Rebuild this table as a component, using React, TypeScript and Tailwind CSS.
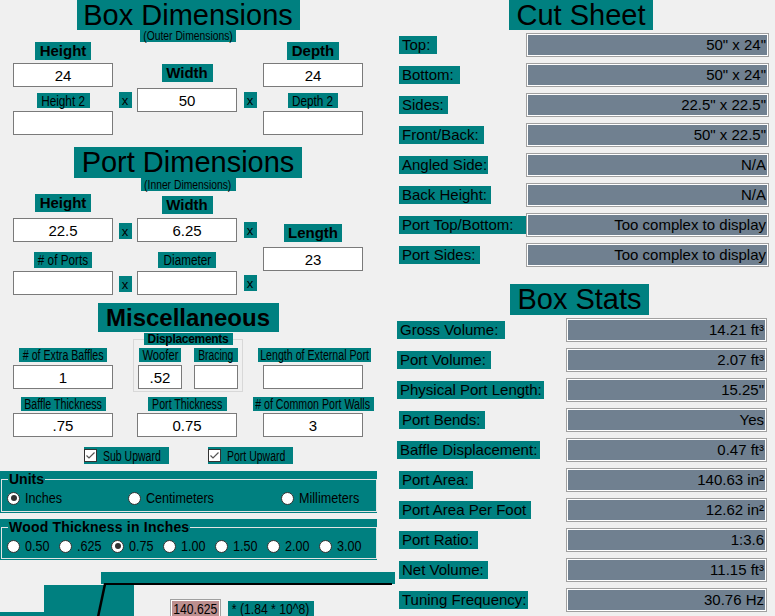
import React from "react";

function Tag({ className = "", children }: { className?: string; children?: React.ReactNode }) {
  return (
    <div className={`bg-[#008080] text-black flex items-center justify-center whitespace-nowrap ${className}`}>
      {children}
    </div>
  );
}

// condensed text, like the old form's narrow labels
function Narrow({
  className = "text-[14px] leading-[14px] scale-x-[0.76]",
  children,
}: {
  className?: string;
  children: React.ReactNode;
}) {
  return <span className={`inline-block whitespace-nowrap ${className}`}>{children}</span>;
}

function Field({ value = "", className = "w-[100px]" }: { value?: string; className?: string }) {
  return (
    <input
      readOnly
      value={value}
      className={`h-[24px] border border-[#7a7a7a] bg-white text-center text-[15px] text-black outline-none ${className}`}
    />
  );
}

function XBox() {
  return <div className="w-[13px] h-[16px] bg-[#008080] flex items-center justify-center text-[13px] leading-none pt-[1px]">x</div>;
}

function Check({ label, className = "" }: { label: string; className?: string }) {
  return (
    <div className={`h-[17px] w-[85px] bg-[#008080] flex items-center ${className}`}>
      <span className="w-[13px] h-[13px] bg-white border border-[#333] flex items-center justify-center shrink-0">
        <svg width="11" height="11" viewBox="0 0 11 11">
          <path d="M1.5 5.5 L4 8 L9.5 2.5" fill="none" stroke="#555" strokeWidth="1.2" />
        </svg>
      </span>
      <span className="ml-[6px] inline-block origin-left whitespace-nowrap text-[14px] leading-[14px] scale-x-[0.75]">{label}</span>
    </div>
  );
}

function Radio({ checked = false }: { checked?: boolean }) {
  return (
    <span className="w-[13px] h-[13px] rounded-full bg-white border border-[#333] flex items-center justify-center shrink-0">
      {checked && <span className="w-[6px] h-[6px] rounded-full bg-[#333]" />}
    </span>
  );
}

function RadioText({ children }: { children: React.ReactNode }) {
  return <span className="inline-block origin-left whitespace-nowrap text-[14px] leading-[14px] scale-x-[0.9]">{children}</span>;
}

function ValBox({ className = "", children }: { className?: string; children: React.ReactNode }) {
  return (
    <div
      className={`h-[24px] border border-[#a0a0a0] bg-[#708090] shadow-[inset_0_0_0_1px_#ffffff] flex items-center justify-end pr-[2px] text-[15px] whitespace-nowrap ${className}`}
    >
      {children}
    </div>
  );
}

const cutRows = [
  ["Top:", '50" x 24"', "w-[38px]"],
  ["Bottom:", '50" x 24"', "w-[61px]"],
  ["Sides:", '22.5" x 22.5"', "w-[49px]"],
  ["Front/Back:", '50" x 22.5"', "w-[85px]"],
  ["Angled Side:", "N/A", "w-[89px]"],
  ["Back Height:", "N/A", "w-[92px]"],
  ["Port Top/Bottom:", "Too complex to display", "w-[127px]"],
  ["Port Sides:", "Too complex to display", "w-[81px]"],
];

const statRows = [
  ["Gross Volume:", "14.21 ft³", "w-[108px]"],
  ["Port Volume:", "2.07 ft³", "w-[94px]"],
  ["Physical Port Length:", '15.25"', "w-[147px]"],
  ["Port Bends:", "Yes", "w-[86px] ml-[2px]"],
  ["Baffle Displacement:", "0.47 ft³", "w-[143px]"],
  ["Port Area:", "140.63 in²", "w-[74px] ml-[2px]"],
  ["Port Area Per Foot", "12.62 in²", "w-[132px] ml-[2px]"],
  ["Port Ratio:", "1:3.6", "w-[79px] ml-[2px]"],
  ["Net Volume:", "11.15 ft³", "w-[89px] ml-[2px]"],
  ["Tuning Frequency:", "30.76 Hz", "w-[129px] ml-[2px]"],
];

const woods = ["0.50", ".625", "0.75", "1.00", "1.50", "2.00", "3.00"];

const small = "text-[14px] leading-[14px] scale-x-[0.84]";
const sub = "text-[12px] leading-[12px] scale-x-[0.86]";
const bottomText = "text-[14px] leading-[14px] scale-x-[0.87]";

export default function App() {
  return (
    <div className="w-[775px] h-[616px] overflow-hidden bg-[#f0f0f0] flex font-['Liberation_Sans',Arial,sans-serif] text-black">
      {/* left side */}
      <div className="w-[397px] shrink-0">
        <div className="w-[350px] ml-[13px]">
          {/* Box Dimensions */}
          <Tag className="mx-auto w-[223px] h-[30px] text-[29px] leading-none">Box Dimensions</Tag>
          <Tag className="mx-auto w-[96px] h-[12px]">
            <Narrow className={sub}>(Outer Dimensions)</Narrow>
          </Tag>
          <div className="grid grid-cols-[100px_24px_100px_26px_100px] items-start">
            <div className="flex flex-col items-center">
              <Tag className="w-[56px] h-[18px] text-[15px] font-bold">Height</Tag>
              <Field value="24" className="w-[100px] mt-[3px]" />
              <Tag className="w-[53px] h-[15px] mt-[6px]">
                <Narrow className={small}>Height 2</Narrow>
              </Tag>
              <Field className="w-[100px] mt-[3px]" />
            </div>
            <div className="flex justify-center pt-[50px]">
              <XBox />
            </div>
            <div className="flex flex-col items-center pt-[22px]">
              <Tag className="w-[51px] h-[18px] text-[15px] font-bold">Width</Tag>
              <Field value="50" className="w-[100px] mt-[6px]" />
            </div>
            <div className="flex justify-center pt-[50px]">
              <XBox />
            </div>
            <div className="flex flex-col items-center">
              <Tag className="w-[52px] h-[18px] text-[15px] font-bold">Depth</Tag>
              <Field value="24" className="w-[100px] mt-[3px]" />
              <Tag className="w-[50px] h-[15px] mt-[6px]">
                <Narrow className={small}>Depth 2</Narrow>
              </Tag>
              <Field className="w-[100px] mt-[3px]" />
            </div>
          </div>

          {/* Port Dimensions */}
          <Tag className="mx-auto mt-[12px] w-[228px] h-[31px] text-[29px] leading-none">Port Dimensions</Tag>
          <Tag className="mx-auto w-[95px] h-[13px]">
            <Narrow className={sub}>(Inner Dimensions)</Narrow>
          </Tag>
          <div className="grid grid-cols-[100px_24px_100px_26px_100px] items-start">
            <div className="flex flex-col items-center pt-[3px]">
              <Tag className="w-[56px] h-[18px] text-[15px] font-bold">Height</Tag>
              <Field value="22.5" className="w-[100px] mt-[6px]" />
              <Tag className="w-[58px] h-[16px] mt-[10px]">
                <Narrow className={small}># of Ports</Narrow>
              </Tag>
              <Field className="w-[100px] mt-[3px]" />
            </div>
            <div className="flex flex-col items-center pt-[32px]">
              <XBox />
              <div className="mt-[37px]">
                <XBox />
              </div>
            </div>
            <div className="flex flex-col items-center pt-[5px]">
              <Tag className="w-[51px] h-[18px] text-[15px] font-bold">Width</Tag>
              <Field value="6.25" className="w-[100px] mt-[4px]" />
              <Tag className="w-[58px] h-[16px] mt-[10px]">
                <Narrow className={small}>Diameter</Narrow>
              </Tag>
              <Field className="w-[100px] mt-[3px]" />
            </div>
            <div className="flex flex-col items-center pt-[31px]">
              <XBox />
              <div className="mt-[37px]">
                <XBox />
              </div>
            </div>
            <div className="flex flex-col items-center pt-[33px]">
              <Tag className="w-[58px] h-[18px] text-[15px] font-bold">Length</Tag>
              <Field value="23" className="w-[100px] mt-[5px]" />
            </div>
          </div>

          {/* Miscellaneous */}
          <Tag className="mx-auto mt-[8px] w-[181px] h-[29px] text-[24px] font-bold leading-none">Miscellaneous</Tag>
          <div className="flex items-start">
            <div className="w-[100px] flex flex-col items-center pt-[16px]">
              <Tag className="w-[88px] h-[14px]">
                <Narrow># of Extra Baffles</Narrow>
              </Tag>
              <Field value="1" className="w-[100px] mt-[3px]" />
            </div>
            <div className="ml-[20px] mt-[7px] w-[110px] border border-[#d8d8d8] flex flex-col pb-[2px]">
              <Tag className="mx-auto -mt-[7px] w-[89px] h-[12px] text-[12px] font-bold tracking-[-0.3px]">Displacements</Tag>
              <div className="flex pl-[4px] gap-[12px]">
                <div className="w-[44px] flex flex-col items-center">
                  <Tag className="w-[42px] h-[14px] mt-[3px]">
                    <Narrow className="text-[14px] leading-[14px] scale-x-[0.8]">Woofer</Narrow>
                  </Tag>
                  <Field value=".52" className="w-[44px] mt-[3px]" />
                </div>
                <div className="w-[44px] flex flex-col items-center">
                  <Tag className="w-[44px] h-[14px] mt-[3px]">
                    <Narrow className="text-[14px] leading-[14px] scale-x-[0.74]">Bracing</Narrow>
                  </Tag>
                  <Field className="w-[44px] mt-[3px]" />
                </div>
              </div>
            </div>
            <div className="ml-[20px] w-[100px] flex flex-col items-center pt-[16px]">
              <Tag className="w-[113px] h-[14px] ml-[3px]">
                <Narrow>Length of External Port</Narrow>
              </Tag>
              <Field className="w-[100px] mt-[3px]" />
            </div>
          </div>
          <div className="flex items-start mt-[5px]">
            <div className="w-[100px] flex flex-col items-center">
              <Tag className="w-[85px] h-[14px]">
                <Narrow>Baffle Thickness</Narrow>
              </Tag>
              <Field value=".75" className="w-[100px] mt-[2px]" />
            </div>
            <div className="ml-[24px] w-[100px] flex flex-col items-center">
              <Tag className="w-[79px] h-[14px]">
                <Narrow>Port Thickness</Narrow>
              </Tag>
              <Field value="0.75" className="w-[100px] mt-[2px]" />
            </div>
            <div className="ml-[26px] w-[100px] flex flex-col items-center">
              <Tag className="w-[121px] h-[14px]">
                <Narrow># of Common Port Walls</Narrow>
              </Tag>
              <Field value="3" className="w-[100px] mt-[2px]" />
            </div>
          </div>
          <div className="flex mt-[10px]">
            <Check label="Sub Upward" className="ml-[71px]" />
            <Check label="Port Upward" className="ml-[39px]" />
          </div>
        </div>

        {/* Units */}
        <div className="mt-[7px] w-[377px] h-[42px] bg-[#008080] pl-[1px]">
          <fieldset className="h-[41px] w-[376px] border border-[#e4e4e4] m-0 p-0 min-w-0">
            <legend className="ml-[6px] px-[1px] text-[14px] leading-[16px] font-bold">Units</legend>
            <div className="flex items-center mt-[4px] pl-[5px]">
              <div className="w-[121px] flex items-center gap-[5px]">
                <Radio checked />
                <RadioText>Inches</RadioText>
              </div>
              <div className="w-[153px] flex items-center gap-[5px]">
                <Radio />
                <RadioText>Centimeters</RadioText>
              </div>
              <div className="flex items-center gap-[5px]">
                <Radio />
                <RadioText>Millimeters</RadioText>
              </div>
            </div>
          </fieldset>
        </div>

        {/* Wood Thickness */}
        <div className="mt-[6px] w-[377px] h-[41px] bg-[#008080] pl-[1px]">
          <fieldset className="h-[40px] w-[376px] border border-[#e4e4e4] m-0 p-0 min-w-0">
            <legend className="ml-[6px] px-[1px] text-[14px] leading-[16px] font-bold tracking-[0.2px]">
              Wood Thickness in Inches
            </legend>
            <div className="grid grid-cols-[repeat(7,52px)] mt-[4px] pl-[5px]">
              {woods.map((w) => (
                <div key={w} className="flex items-center gap-[5px]">
                  <Radio checked={w === "0.75"} />
                  <RadioText>{w}</RadioText>
                </div>
              ))}
            </div>
          </fieldset>
        </div>

        {/* box drawing */}
        <div className="relative h-[56px] w-[397px]">
          <svg className="absolute inset-0" width="397" height="56" viewBox="0 0 397 56">
            <rect x="0" y="52" width="44" height="4" fill="#008080" />
            <rect x="44" y="25" width="90" height="31" fill="#008080" />
            <rect x="101" y="12" width="294" height="12" fill="#008080" />
            <line x1="104" y1="24" x2="392" y2="24" stroke="#000" strokeWidth="2" />
            <line x1="105" y1="24" x2="98" y2="57" stroke="#000" strokeWidth="2.5" />
          </svg>
          <div className="relative flex items-start pl-[170px] pt-[39px]">
            <div className="w-[51px] h-[17px] border border-[#a0a0a0] border-b-0 bg-[#bc8f8f] shadow-[inset_1px_1px_0_0_#ffffff,inset_-1px_0_0_0_#ffffff] flex items-start justify-center pt-[2px]">
              <Narrow className={bottomText}>140.625</Narrow>
            </div>
            <Tag className="ml-[7px] mt-[2px] w-[86px] h-[15px]">
              <Narrow className={bottomText}>* (1.84 * 10^8)</Narrow>
            </Tag>
          </div>
        </div>
      </div>

      {/* right side */}
      <div className="flex-1">
        <Tag className="ml-[112px] w-[144px] h-[30px] text-[29px] leading-none">Cut Sheet</Tag>
        <div className="mt-[3px] w-[372px] flex flex-col gap-[6px]">
          {cutRows.map(([label, value, w]) => (
            <div key={label} className="flex items-start h-[24px]">
              <div className={`ml-[2px] mt-[3px] h-[18px] bg-[#008080] pl-[3px] text-[15px] leading-[18px] whitespace-nowrap ${w}`}>
                {label}
              </div>
              <ValBox className="ml-auto w-[243px]">{value}</ValBox>
            </div>
          ))}
        </div>

        <Tag className="ml-[113px] mt-[17px] w-[139px] h-[31px] text-[29px] leading-none">Box Stats</Tag>
        <div className="mt-[3px] w-[370px] flex flex-col gap-[6px]">
          {statRows.map(([label, value, w]) => (
            <div key={label} className="flex items-start h-[24px]">
              <div className={`mt-[3px] h-[18px] bg-[#008080] pl-[3px] text-[15px] leading-[18px] whitespace-nowrap ${w}`}>
                {label}
              </div>
              <ValBox className="ml-auto w-[201px]">{value}</ValBox>
            </div>
          ))}
        </div>
      </div>
    </div>
  );
}
